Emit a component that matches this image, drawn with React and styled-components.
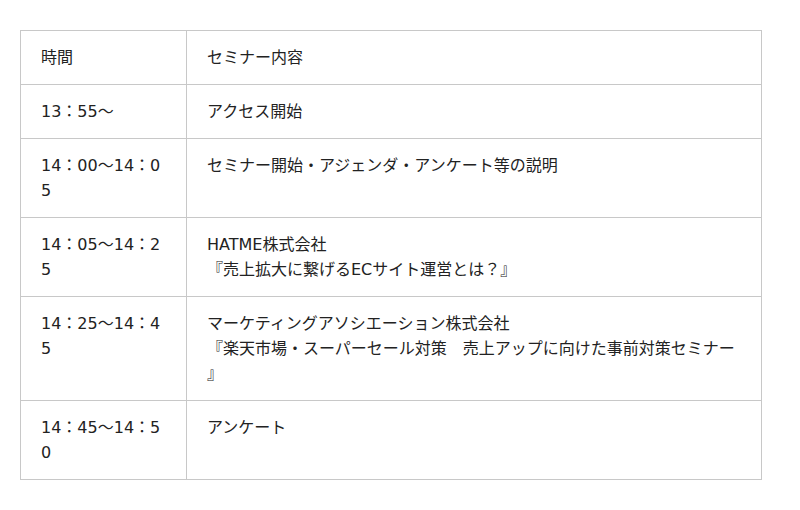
import React from "react";
import styled, { createGlobalStyle } from "styled-components";

const Global = createGlobalStyle`
  html, body { margin: 0; padding: 0; background: #fff; }
  body { font-family: "DejaVu Sans", "Noto Sans CJK JP", sans-serif; }
`;

const Page = styled.div`
  padding: 30px 38px 30px 20px;
`;

const Table = styled.table`
  width: 742px;
  border-collapse: collapse;
  table-layout: fixed;
  color: #222;
  font-size: 16px;
  line-height: 25px;
`;

const Cell = styled.td`
  border: 1px solid #c8c8c8;
  padding: 14px 20px;
  vertical-align: top;
  text-align: left;
  word-break: break-all;
  line-break: anywhere;
  width: ${(p) => (p.$time ? "125px" : "auto")};
`;

const rows = [
  ["時間", ["セミナー内容"]],
  ["13：55～", ["アクセス開始"]],
  ["14：00～14：05", ["セミナー開始・アジェンダ・アンケート等の説明"]],
  ["14：05～14：25", ["HATME株式会社", "『売上拡大に繋げるECサイト運営とは？』"]],
  [
    "14：25～14：45",
    [
      "マーケティングアソシエーション株式会社",
      "『楽天市場・スーパーセール対策　売上アップに向けた事前対策セミナー』",
    ],
  ],
  ["14：45～14：50", ["アンケート"]],
];

export default function App() {
  return (
    <>
      <Global />
      <Page>
        <Table>
          <tbody>
            {rows.map(([time, lines], i) => (
              <tr key={i}>
                <Cell $time>{time}</Cell>
                <Cell>
                  {lines.map((l, j) => (
                    <React.Fragment key={j}>
                      {j > 0 && <br />}
                      {l}
                    </React.Fragment>
                  ))}
                </Cell>
              </tr>
            ))}
          </tbody>
        </Table>
      </Page>
    </>
  );
}
